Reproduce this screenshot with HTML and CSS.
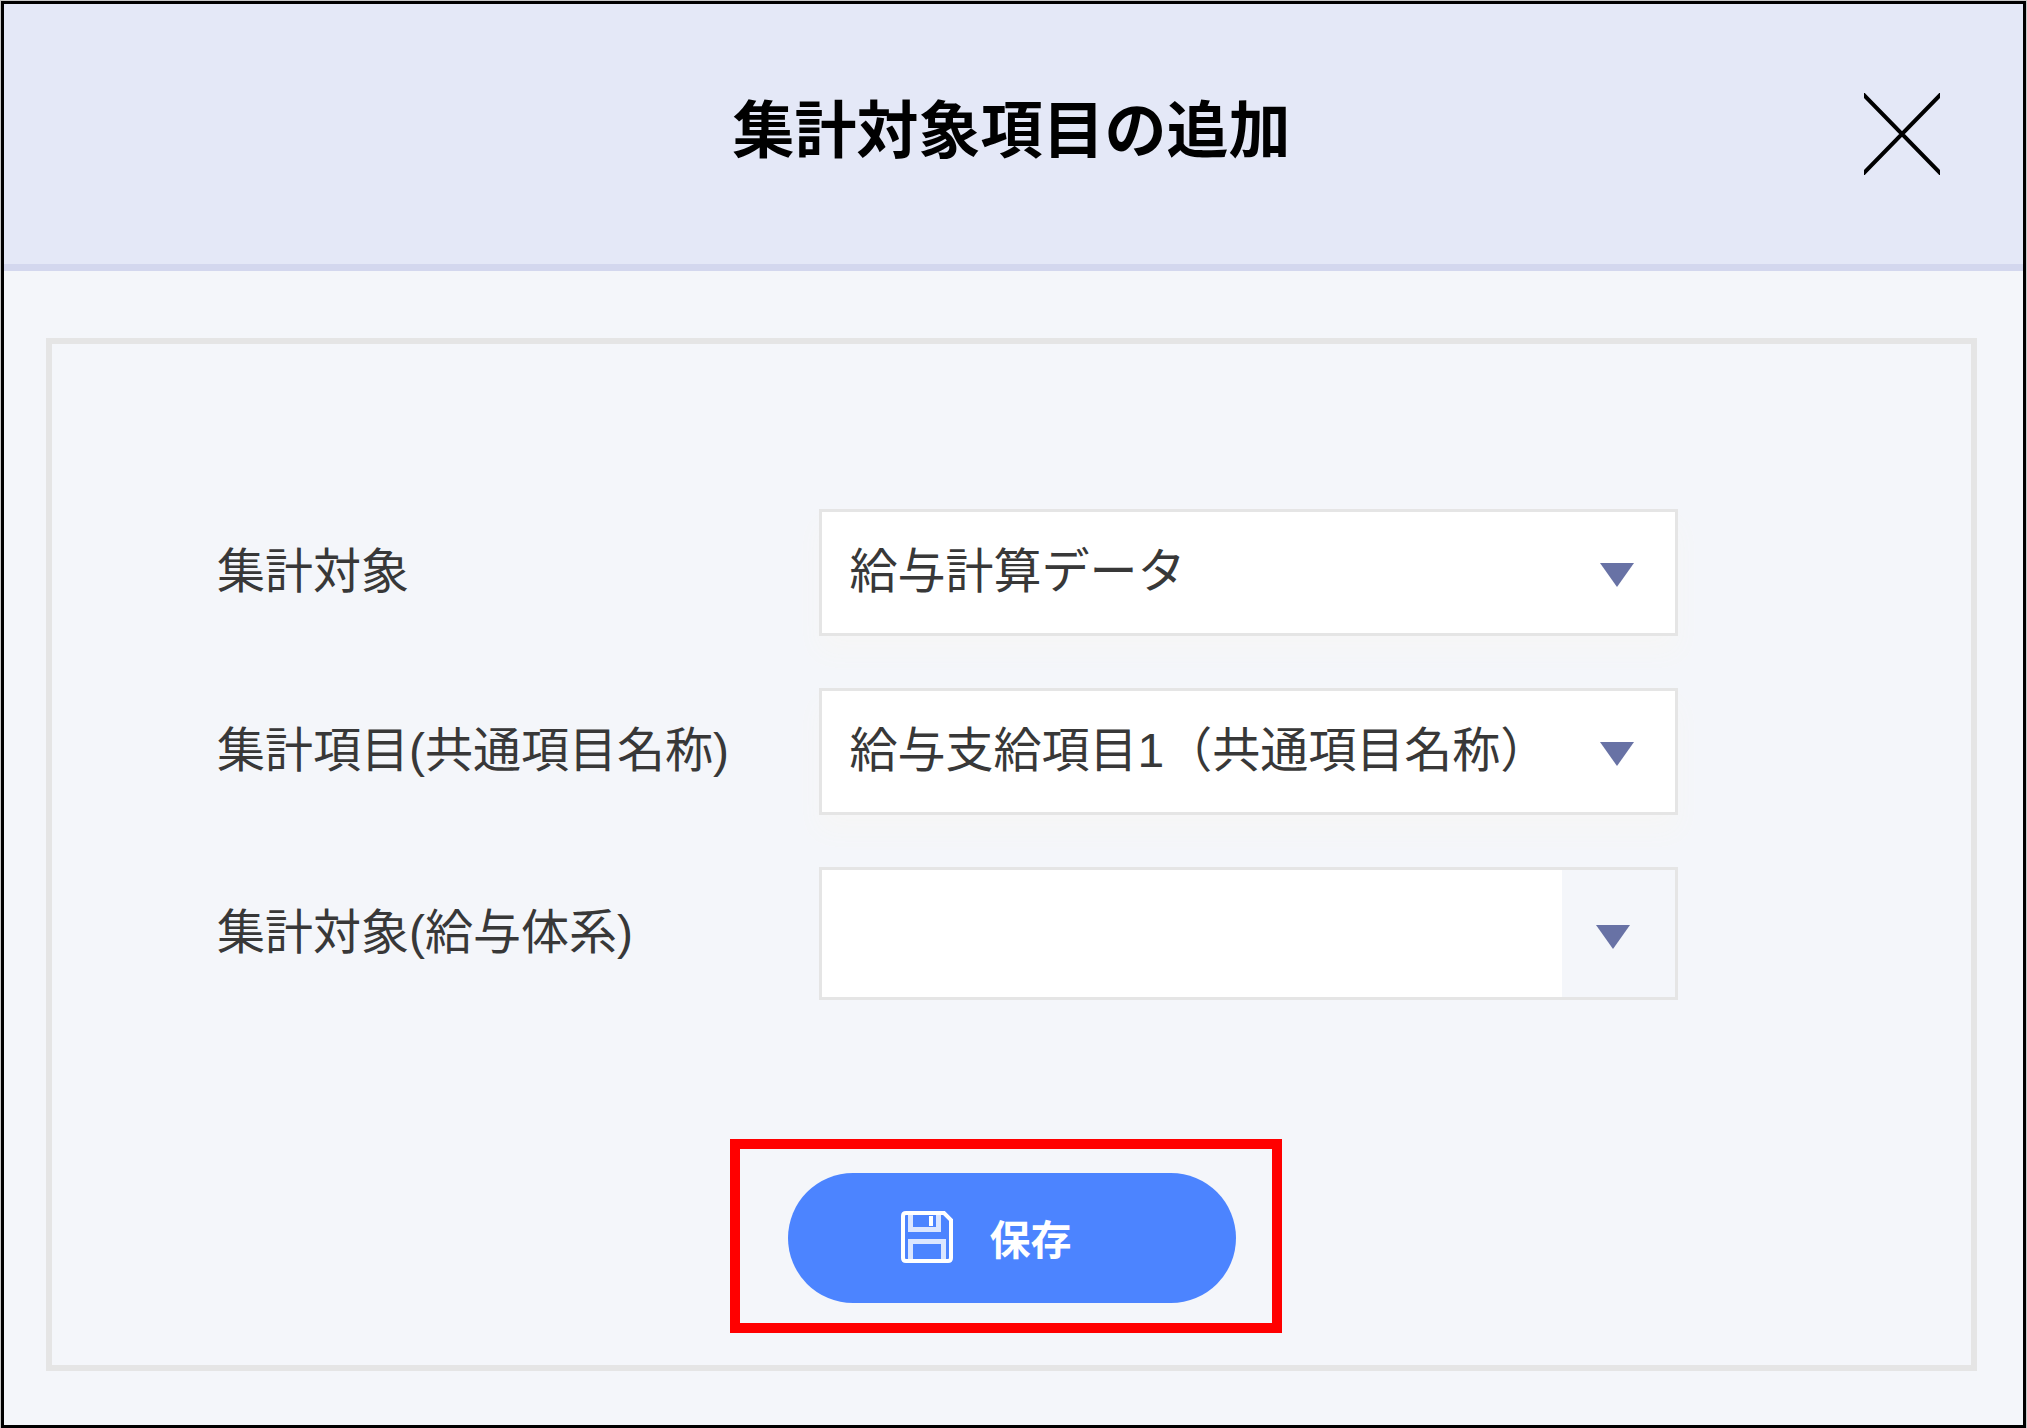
FILE: index.html
```html
<!DOCTYPE html>
<html lang="ja">
<head>
<meta charset="utf-8">
<meta name="viewport" content="width=device-width, initial-scale=1">
<title>集計対象項目の追加</title>
<link rel="stylesheet" href="styles.css">
</head>
<body>
<main class="dialog" role="dialog" aria-labelledby="dialog-title">
  <header class="dialog-header">
    <h1 class="dialog-title" id="dialog-title">集計対象項目の追加</h1>
    <button class="close-button" type="button" aria-label="閉じる">
      <svg class="close-icon" viewBox="0 0 76 82" aria-hidden="true"><path d="M-3 -1 79 83M79 -1-3 83" stroke="#000" stroke-width="4" fill="none"/></svg>
    </button>
  </header>
  <div class="dialog-body">
    <form class="panel">
      <div class="fields">
        <label class="label" for="target">集計対象</label>
        <div class="select-box">
          <select class="select" id="target"><option>給与計算データ</option></select>
          <svg class="arrow" viewBox="0 0 34 24" aria-hidden="true"><path d="M0 0h34L17 24z"/></svg>
        </div>
        <label class="label" for="item">集計項目(共通項目名称)</label>
        <div class="select-box">
          <select class="select" id="item"><option>給与支給項目1（共通項目名称）</option></select>
          <svg class="arrow" viewBox="0 0 34 24" aria-hidden="true"><path d="M0 0h34L17 24z"/></svg>
        </div>
        <label class="label" for="system">集計対象(給与体系)</label>
        <div class="combo">
          <input class="combo-input" id="system" type="text">
          <button class="combo-button" type="button" aria-label="給与体系を選択">
            <svg class="arrow" viewBox="0 0 34 24" aria-hidden="true"><path d="M0 0h34L17 24z"/></svg>
          </button>
        </div>
      </div>
      <div class="actions">
        <div class="highlight">
          <button class="save-button" type="button">
            <svg class="save-icon" viewBox="0 0 52 52" fill="none" stroke="#fff" aria-hidden="true">
              <path d="M5 2H43L50 9V47Q50 50 47 50H5Q2 50 2 47V5Q2 2 5 2Z" stroke-width="4"/>
              <path d="M9.500 3V18.500H37.500V3" stroke-width="5" stroke-opacity=".8"/>
              <path d="M9.500 49V30.500H42.500V49" stroke-width="5" stroke-opacity=".8"/>
              <path d="M30 5V15" stroke-width="4"/>
            </svg>
            <span>保存</span>
          </button>
        </div>
      </div>
    </form>
  </div>
</main>
</body>
</html>
```
FILE: styles.css
```css
* {
  box-sizing: border-box;
}

body {
  margin: 0;
  padding: 1px;
  background: #c8c8c8;
  color: #383838;
  font-family: "Liberation Sans", "Noto Sans CJK JP", sans-serif;
  font-size: 48px;
}

button,
input,
select {
  margin: 0;
  padding: 0;
  border: 0;
  background: none;
  color: inherit;
  font: inherit;
}

.dialog {
  display: flex;
  flex-direction: column;
  min-height: calc(100vh - 2px);
  border: 3px solid #000;
  background: #f4f6fa;
}

.dialog-header {
  display: grid;
  grid-template-columns: 1fr auto 1fr;
  align-items: center;
  min-height: 267px;
  padding: 0 83px 0 79px;
  border-bottom: 7px solid #d3d7ee;
  background: #e4e8f7;
}

.dialog-title {
  grid-column: 2;
  margin: 0;
  padding-bottom: 4px;
  color: #000;
  font-size: 62px;
  font-weight: 700;
  line-height: 80px;
}

.close-button {
  justify-self: end;
  display: flex;
}

.close-icon {
  width: 76px;
  height: 82px;
}

.dialog-body {
  flex: 1;
  display: flex;
  padding: 67px 46px 54px 42px;
}

.panel {
  flex: 1;
  padding: 165px 0 32px;
  border: 6px solid #e5e5e5;
}

.fields {
  display: grid;
  grid-template-columns: 7fr 10fr;
  row-gap: 52px;
  align-items: center;
  padding: 0 293px 0 165px;
}

.label {
  padding-bottom: 2px;
  line-height: 60px;
}

.select-box {
  display: grid;
  align-items: center;
  border: 3px solid #e5e5e5;
  background: #fff;
  box-shadow: 0 16px 24px #f6f6f6;
}

.select {
  grid-area: 1 / 1;
  width: 100%;
  height: 121px;
  padding: 0 88px 2px 28px;
  appearance: none;
}

.arrow {
  width: 34px;
  height: 24px;
  fill: #6872a5;
}

.select-box .arrow {
  grid-area: 1 / 1;
  justify-self: end;
  margin: 5px 41px 0 0;
  pointer-events: none;
}

.combo {
  display: flex;
  height: 133px;
  border: 3px solid #e5e5e5;
}

.combo-input {
  flex: 1;
  min-width: 0;
  padding: 0 28px;
  background: #fff;
}

.combo-button {
  display: flex;
  align-items: center;
  justify-content: center;
  width: 113px;
  padding: 6px 12px 0 0;
}

.actions {
  display: flex;
  justify-content: center;
  margin-top: 139px;
  padding-right: 12px;
}

.highlight {
  padding: 24px 36px 20px 48px;
  border: 10px solid #f00;
}

.save-button {
  display: flex;
  align-items: center;
  gap: 37px;
  width: 448px;
  height: 130px;
  padding: 0 0 2px 113px;
  border-radius: 65px;
  background: #4c84ff;
  color: #fff;
  font-size: 41px;
  font-weight: 700;
}

.save-icon {
  width: 52px;
  height: 52px;
}
```
